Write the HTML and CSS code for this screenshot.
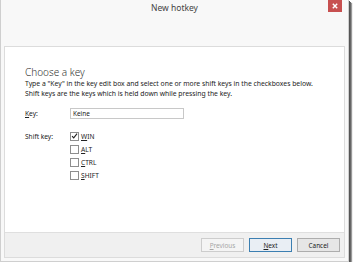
FILE: index.html
```html
<!DOCTYPE html>
<html lang="en">
<head>
    <meta charset="UTF-8">
    <title>New hotkey</title>
    <link rel="stylesheet" href="styles.css">
</head>
<body>
    <div class="window">
        <div class="titlebar">
            <span class="title">New hotkey</span>
            <span class="close"><svg width="6" height="6" viewBox="0 0 6 6"><path d="M0.8 0.8 L5.2 5.2 M5.2 0.8 L0.8 5.2" stroke="#fff" stroke-width="1.4"/></svg></span>
        </div>

        <div class="panel">
            <div class="content">
                <h1>Choose a key</h1>
                <p class="hint">Type a "Key" in the key edit box and select one or more shift keys in the checkboxes below.<br>
                Shift keys are the keys which is held down while pressing the key.</p>

                <div class="row">
                    <label class="field-label" for="key"><u>K</u>ey:</label>
                    <input type="text" id="key" class="keybox" value="Keine">
                </div>

                <div class="row shift-row">
                    <span class="field-label">Shift key:</span>
                    <div class="checks">
                        <div class="check">
                            <span class="box"><svg width="8" height="8" viewBox="0 0 8 8"><path d="M1.2 4.2 L3.1 6.2 L6.9 1.4" fill="none" stroke="#222" stroke-width="1.3"/></svg></span>
                            <span><u>W</u>IN</span>
                        </div>
                        <div class="check"><span class="box"></span><span><u>A</u>LT</span></div>
                        <div class="check"><span class="box"></span><span><u>C</u>TRL</span></div>
                        <div class="check"><span class="box"></span><span><u>S</u>HIFT</span></div>
                    </div>
                </div>
            </div>

            <div class="footer">
                <button class="btn disabled"><u>P</u>revious</button>
                <button class="btn default"><u>N</u>ext</button>
                <button class="btn">Cancel</button>
            </div>
        </div>
    </div>
</body>
</html>
```

FILE: styles.css
```css
body { margin: 0; background: #fff; font-family: "Noto Sans", "Open Sans", sans-serif; color: #222; }
.window {
    width: 347px;
    height: 261px;
    background: #f8f8f8;
    border: 1px solid #cfcfcf;
    border-top: none;
    box-shadow: 1px 1px 0 #555, 2px 2px 0 #666, 3px 3px 1px #999;
    display: flex;
    flex-direction: column;
}
.titlebar {
    position: relative;
    height: 46px;
    text-align: center;
}
.title {
    display: block;
    padding-top: 2px;
    font-size: 8.5px;
    color: #444;
}
.close {
    position: absolute;
    top: 0;
    right: 6px;
    width: 14px;
    height: 12px;
    background: #c75050;
    display: flex;
    align-items: center;
    justify-content: center;
}
.panel {
    flex: 1;
    margin: 0 3px 3px 3px;
    background: #fff;
    border: 1px solid #dcdcdc;
    display: flex;
    flex-direction: column;
}
.content { flex: 1; padding: 18px 0 0 20px; }
h1 {
    margin: 0;
    font-size: 10px;
    font-weight: 300;
    color: #333;
    line-height: 14px;
}
.hint {
    margin: 0;
    font-size: 6.8px;
    line-height: 9.5px;
}
.row { display: flex; align-items: center; margin-top: 10px; font-size: 6.6px; }
.field-label { width: 45px; }
.keybox {
    width: 108px;
    height: 9px;
    padding: 0 2px;
    margin: 0;
    border: 1px solid #c8c8c8;
    font-family: inherit;
    font-size: 6.4px;
    color: #222;
}
.shift-row { align-items: flex-start; margin-top: 13px; }
.checks { display: flex; flex-direction: column; gap: 5px; }
.check { display: flex; align-items: center; gap: 2px; height: 8px; }
.box {
    width: 7px;
    height: 7px;
    border: 1px solid #8e8e8e;
    background: #fff;
    display: flex;
}
.box svg { margin: -1px 0 0 0; }
.footer {
    height: 24px;
    background: #f0f0f0;
    border-top: 1px solid #dfdfdf;
    display: flex;
    justify-content: flex-end;
    align-items: center;
    gap: 5px;
    padding-right: 4px;
}
.btn {
    width: 43px;
    height: 14px;
    padding: 0;
    background: #e6e6e6;
    border: 1px solid #adadad;
    font-family: inherit;
    font-size: 6.4px;
    color: #222;
}
.btn.default { border-color: #3c7fb1; background: #e9eef4; }
.btn.disabled { color: #a6a6a6; border-color: #cdcdcd; background: #f4f4f4; }
```
